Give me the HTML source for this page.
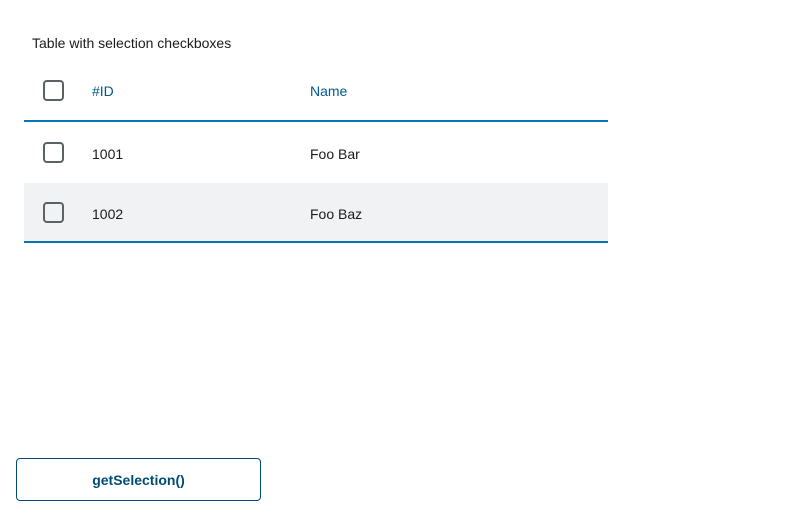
<!DOCTYPE html><html><head><style>
body{margin:0;width:800px;height:518px;background:#fff;font-family:"Liberation Sans",sans-serif;position:relative;overflow:hidden}
.t{position:absolute;left:32px;top:35px;font-size:14px;color:#1b1b1b}
.cb{position:absolute;left:43px;width:17px;height:17px;border:2px solid #5b6266;border-radius:4px}
.tx{position:absolute;font-size:14px;color:#1b1b1b}
.h{color:#005a8c}
.line{position:absolute;left:24px;width:584px;height:2px;background:#0a74b0}
.bg{position:absolute;left:24px;top:183px;width:584px;height:59px;background:#f1f2f3}
.btn{position:absolute;left:16px;top:458px;width:245px;height:43px;border:1px solid #004b76;border-radius:4px;box-sizing:border-box;text-align:center;line-height:43px;font-weight:bold;font-size:14px;color:#004b76}
</style></head><body>
<div class="t">Table with selection checkboxes</div>
<div class="cb" style="top:80px"></div>
<div class="tx h" style="left:92px;top:83px">#ID</div>
<div class="tx h" style="left:310px;top:83px">Name</div>
<div class="line" style="top:120px"></div>
<div class="cb" style="top:142px"></div>
<div class="tx" style="left:92px;top:146px">1001</div>
<div class="tx" style="left:310px;top:146px">Foo Bar</div>
<div class="bg"></div>
<div class="cb" style="top:202px"></div>
<div class="tx" style="left:92px;top:206px">1002</div>
<div class="tx" style="left:310px;top:206px">Foo Baz</div>
<div class="line" style="top:241px"></div>
<div class="btn">getSelection()</div>
</body></html>
